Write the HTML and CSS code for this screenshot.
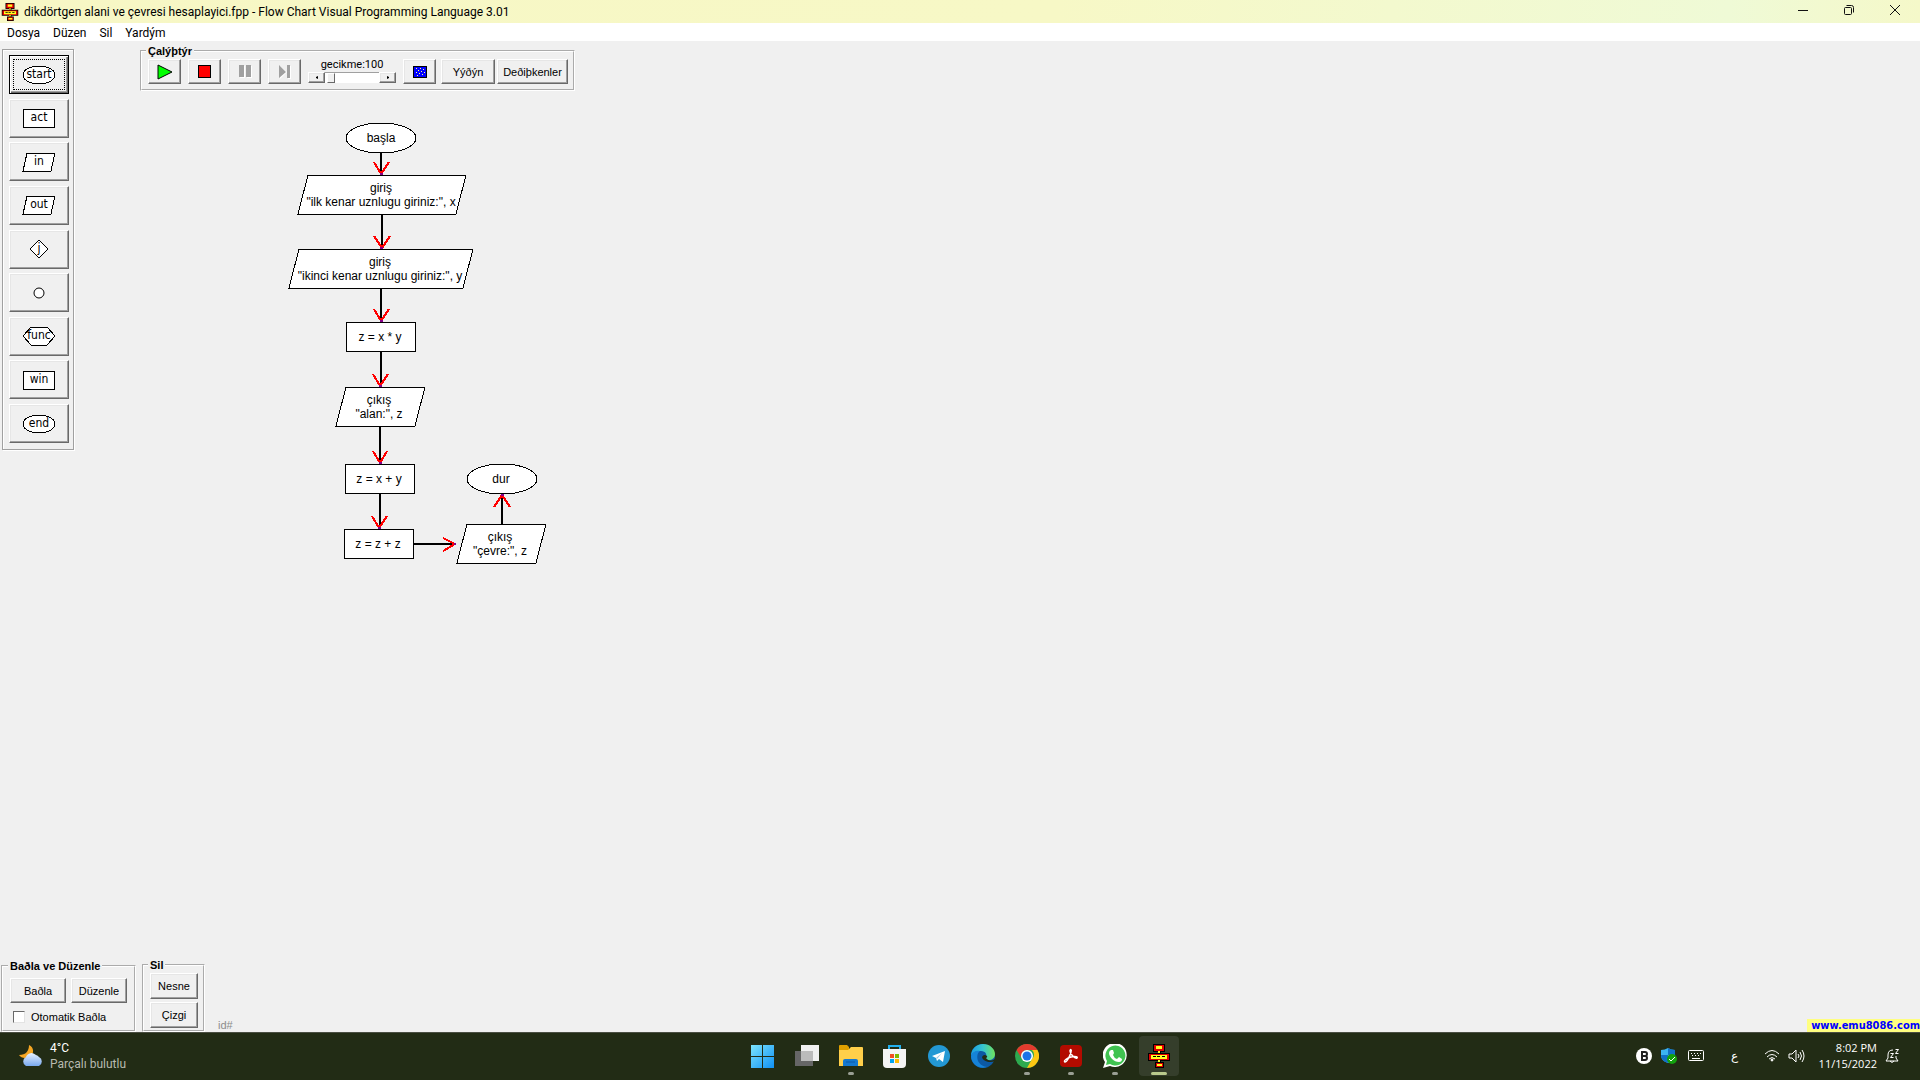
FILE: index.html
```html
<!DOCTYPE html>
<html lang="tr">
<head>
<meta charset="utf-8">
<meta name="viewport" content="width=device-width, initial-scale=1">
<title>dikdörtgen alani ve çevresi hesaplayici.fpp - Flow Chart Visual Programming Language 3.01</title>
<link rel="stylesheet" href="styles.css">
</head>
<body>
<svg class="defs" width="0" height="0" aria-hidden="true">
  <symbol id="app" viewBox="0 0 24 24">
    <path fill="#000" d="M6 0h12v8H6zM1 9h22v8H1zM8 18h9v6H8zM11 7h3v12h-3z"/>
    <path fill="#e00000" d="M7 1h10v6H7zM2 10h20v6H2zM9 19h7v4H9z"/>
    <path fill="#ffff20" d="M9 2h6v3H9zM4 11h16v4H4zM10 20h5v2h-5zM11 7h2v2h-2zM11 16h2v2h-2z"/>
    <path fill="#000" d="M6 12h3v1H6zM10 12h3v1h-3zM15 12h3v1h-3z"/>
  </symbol>
</svg>
<header class="titlebar">
  <svg class="title-icon" viewBox="0 0 24 24"><use href="#app"/></svg>
  <h1 class="title">dikdörtgen alani ve çevresi hesaplayici.fpp - Flow Chart Visual Programming Language 3.01</h1>
  <div class="window-controls">
    <button class="window-button" aria-label="Simge durumu"><svg width="12" height="12" viewBox="0 0 12 12"><path d="M1 6h10" stroke="#111" shape-rendering="crispEdges"/></svg></button>
    <button class="window-button" aria-label="Geri yükle"><svg width="12" height="12" viewBox="0 0 12 12" fill="none" stroke="#111"><rect x="1.5" y="3.5" width="7" height="7" rx="1"/><path d="M3.500 1.500h5q2 0 2 2v5"/></svg></button>
    <button class="window-button" aria-label="Kapat"><svg width="12" height="12" viewBox="0 0 12 12" stroke="#111"><path d="M1 1l10 10M11 1L1 11"/></svg></button>
  </div>
</header>
<nav class="menubar">
  <a class="menu-item" href="#">Dosya</a>
  <a class="menu-item" href="#">Düzen</a>
  <a class="menu-item" href="#">Sil</a>
  <a class="menu-item" href="#">Yardým</a>
</nav>
<main class="workspace">
  <div class="upper">
    <aside class="palette">
      <button class="btn shape-button selected"><svg class="shape" viewBox="0 0 34 20"><ellipse cx="17" cy="10" rx="16" ry="9"/><text x="17" y="13">start</text></svg></button>
      <button class="btn shape-button"><svg class="shape" viewBox="0 0 34 20"><rect x="1" y="1" width="31" height="18"/><text x="17" y="13">act</text></svg></button>
      <button class="btn shape-button"><svg class="shape" viewBox="0 0 34 20"><path d="M5 1h28l-4 18H1z"/><text x="17" y="13">in</text></svg></button>
      <button class="btn shape-button"><svg class="shape" viewBox="0 0 34 20"><path d="M5 1h28l-4 18H1z"/><text x="17" y="13">out</text></svg></button>
      <button class="btn shape-button"><svg class="shape" viewBox="0 0 34 20"><path d="M17 1l9 9-9 9-9-9z"/><text x="17" y="13">j</text></svg></button>
      <button class="btn shape-button" aria-label="Bağlantı noktası"><svg class="shape" viewBox="0 0 34 20"><circle class="smooth" cx="17" cy="10" r="5"/></svg></button>
      <button class="btn shape-button"><svg class="shape" viewBox="0 0 34 20"><path d="M1 10l8-9h16l8 9-8 9H9z"/><text x="17" y="13">func</text></svg></button>
      <button class="btn shape-button"><svg class="shape" viewBox="0 0 34 20"><rect x="1" y="1" width="31" height="18"/><text x="17" y="13">win</text></svg></button>
      <button class="btn shape-button"><svg class="shape" viewBox="0 0 34 20"><ellipse cx="17" cy="10" rx="16" ry="9"/><text x="17" y="13">end</text></svg></button>
    </aside>
    <div class="editor">
      <fieldset class="group run-group">
        <legend class="legend">Çalýþtýr</legend>
        <div class="run-row">
          <button class="btn tool" aria-label="Çalıştır"><svg width="18" height="16" viewBox="0 0 18 16"><path d="M2 1v14l14-7z" fill="#0f0" stroke="#000"/></svg></button>
          <button class="btn tool" aria-label="Durdur"><svg width="14" height="14" viewBox="0 0 14 14"><path d="M0 0h13v13H0z"/><path d="M1 1h11v11H1z" fill="red"/></svg></button>
          <button class="btn tool" aria-label="Duraklat"><svg width="14" height="14" viewBox="0 0 14 14"><path d="M2 1h5v12H2zM9 1h5v12H9z" fill="#fff"/><path d="M1 0h5v12H1zM8 0h5v12H8z" fill="#a0a0a0"/></svg></button>
          <button class="btn tool" aria-label="Adım"><svg width="14" height="14" viewBox="0 0 14 14"><path d="M2 1v13l7-7zM10 1h3v13h-3z" fill="#fff"/><path d="M1 0v13l7-6zM9 0h3v13H9z" fill="#a0a0a0"/></svg></button>
          <div class="delay">
            <label class="delay-label" for="delay">gecikme:100</label>
            <div class="scroll">
              <button class="btn arrow" aria-label="Azalt"><svg width="2" height="3" viewBox="0 0 2 3"><path d="M2 0v3L0 2V1z"/></svg></button>
              <input class="range" type="range" id="delay" min="0" max="1000" value="50">
              <button class="btn arrow" aria-label="Artır"><svg width="2" height="3" viewBox="0 0 2 3"><path d="M0 0v3l2-1V1z"/></svg></button>
            </div>
          </div>
          <button class="btn tool" aria-label="Ekran"><svg width="14" height="12" viewBox="0 0 14 12"><path d="M0 0h14v12H0z"/><path d="M1 1h12v10H1z" fill="#00f"/><path fill="#ff8" d="M3 2h1v1H3zM7 2h1v1H7zM10 3h1v1h-1zM5 4h1v1H5zM3 6h1v1H3zM8 5h1v1H8zM11 6h1v1h-1zM6 7h1v1H6zM4 9h1v1H4zM9 8h1v1H9z"/></svg></button>
          <button class="btn stack">Yýðýn</button>
          <button class="btn vars">Deðiþkenler</button>
        </div>
      </fieldset>
      <svg class="chart" width="440" height="480" viewBox="140 90 440 480" role="img" aria-label="Akış şeması">
        <g class="link"><path d="M381 153v21M382 215v33M381 289v32M381 352v34M380 427v36M380 494v34M414 544h40M502 524v-29"/></g>
        <g class="head"><path d="M374 162l7 12 8-12M374 236l8 12 8-12M374 309l7 12 8-12M373 374l7 12 8-12M373 451l7 12 7-12M372 516l7 12 8-12M443 538l12 6-12 7M494 507l8-12 8 12"/></g>
        <g class="tip"><path d="M380 174h3M380 248h3M380 321h3M379 386h3M379 463h3M378 528h3M454 544h2M501 495h3"/></g>
        <g class="node">
          <ellipse cx="381" cy="138" rx="35" ry="15"/>
          <path d="M308 175h158l-10 39H298z"/>
          <path d="M299 249h174l-10 39H289z"/>
          <path d="M346 322h69v29h-69z"/>
          <path d="M346 387h79l-10 39h-79z"/>
          <path d="M345 464h69v29h-69z"/>
          <path d="M344 529h69v29h-69z"/>
          <path d="M467 524h79l-10 39h-79z"/>
          <ellipse cx="502" cy="479" rx="35" ry="15"/>
        </g>
        <g class="caption">
          <text x="381" y="142">başla</text>
          <text x="381" y="192">giriş</text><text x="381" y="206">"ilk kenar uznlugu giriniz:", x</text>
          <text x="380" y="266">giriş</text><text x="380" y="280">"ikinci kenar uznlugu giriniz:", y</text>
          <text x="380" y="341">z = x * y</text>
          <text x="379" y="404">çıkış</text><text x="379" y="418">"alan:", z</text>
          <text x="379" y="483">z = x + y</text>
          <text x="378" y="548">z = z + z</text>
          <text x="500" y="541">çıkış</text><text x="500" y="555">"çevre:", z</text>
          <text x="501" y="483">dur</text>
        </g>
      </svg>
    </div>
  </div>
  <div class="lower">
    <fieldset class="group link-group">
      <legend class="legend">Baðla ve Düzenle</legend>
      <div class="pair">
        <button class="btn text-button">Baðla</button>
        <button class="btn text-button">Düzenle</button>
      </div>
      <label class="check"><input class="box" type="checkbox">Otomatik Baðla</label>
    </fieldset>
    <fieldset class="group delete-group">
      <legend class="legend">Sil</legend>
      <div class="column">
        <button class="btn delete-button">Nesne</button>
        <button class="btn delete-button">Çizgi</button>
      </div>
    </fieldset>
    <span class="ident">id#</span>
    <a class="site" href="#">www.emu8086.com</a>
  </div>
</main>
<footer class="taskbar">
  <div class="weather">
    <svg width="26" height="26" viewBox="0 0 26 26">
      <defs><linearGradient id="cl" x1="0" y1="0" x2="0" y2="1"><stop offset="0" stop-color="#e6f0ff"/><stop offset="1" stop-color="#78a8ee"/></linearGradient></defs>
      <path d="M11 2c5 2 6 9 0 12-4 2-8 1-10-2 7 0 10-4 10-10z" fill="#f5a623"/>
      <path d="M8 23a5 5 0 0 1 0-9 6 6 0 0 1 10-2 5 5 0 0 1 3 2 5 5 0 0 1 0 9z" fill="url(#cl)"/>
    </svg>
    <div class="weather-text"><span class="temp">4°C</span><span class="sky">Parçalı bulutlu</span></div>
  </div>
  <div class="apps">
    <button class="app" aria-label="Başlat"><svg width="24" height="24" viewBox="0 0 24 24"><defs><linearGradient id="wn" x1="0" y1="0" x2="1" y2="1"><stop offset="0" stop-color="#7ce4fc"/><stop offset="1" stop-color="#0f90f5"/></linearGradient></defs><path fill="url(#wn)" d="M0 1h11v11H0zM12 1h11v11H12zM0 13h11v11H0zM12 13h11v11H12z"/></svg></button>
    <button class="app" aria-label="Görev görünümü"><svg width="24" height="24" viewBox="0 0 24 24"><path d="M6 1h18v16H6z" fill="#f0f0f0"/><path d="M0 7h18v15H0z" fill="#666"/><path d="M6 7h12v10H6z" fill="#bbb"/></svg></button>
    <button class="app running" aria-label="Dosya Gezgini"><svg width="24" height="24" viewBox="0 0 24 24"><path d="M0 2q0-1 1-1h7l2 2v4H0z" fill="#e0a000"/><path d="M0 6h9l3-3h11q1 0 1 1v18H0z" fill="#ffcf4a"/><path d="M4 22v-5q0-2 2-2h11q2 0 2 2v5z" fill="#1578d0"/><path d="M7 18h9" stroke="#0c58a8"/></svg></button>
    <button class="app" aria-label="Mağaza"><svg width="24" height="24" viewBox="0 0 24 24"><path d="M6 6V2h11v4" fill="none" stroke="#23b0ee" stroke-width="2"/><path d="M0 5h23v15q0 4-4 4H4q-4 0-4-4z" fill="#f4f4f4"/><path d="M7 10h4v4H7z" fill="#f25022"/><path d="M12 10h4v4h-4z" fill="#7fba00"/><path d="M7 15h4v4H7z" fill="#00a4ef"/><path d="M12 15h4v4h-4z" fill="#ffb900"/></svg></button>
    <button class="app" aria-label="Telegram"><svg width="24" height="24" viewBox="0 0 24 24"><circle cx="12" cy="12" r="11" fill="#2398d4"/><path d="M5 12l13-5-2 11-4-3-2 2-1-3z" fill="#fff"/><path d="M9 14l6-5-5 6z" fill="#9cc8e4"/></svg></button>
    <button class="app" aria-label="Edge"><svg width="24" height="24" viewBox="0 0 24 24"><defs><linearGradient id="e1" x1="0" y1="0" x2="1" y2="0"><stop offset="0" stop-color="#1b9de2"/><stop offset=".5" stop-color="#36c5d0"/><stop offset="1" stop-color="#6fe35c"/></linearGradient></defs><circle cx="12" cy="12" r="12" fill="#0c59a4"/><path d="M0 12C0 5 5 0 12 0s12 5 12 10c0 4-3 6-6 6-4 0-5-2-3-3 1-2 0-6-5-6C5 7 1 9 0 12z" fill="url(#e1)"/><path d="M0 12c1-4 5-6 9-5-4 2-5 14 7 16C8 26 0 20 0 12z" fill="#1683d8"/><path d="M24 17c-4 2-12 1-13-4 1-2 3-3 5-1 1 1-2 2 0 3 2 2 5 2 8 0z" fill="#222c15"/></svg></button>
    <button class="app running" aria-label="Chrome"><svg width="24" height="24" viewBox="0 0 24 24"><circle cx="12" cy="12" r="12" fill="#2da94f"/><path d="M1.600 6A12 12 0 0 1 22.400 6H12a6 6 0 0 0-5 9z" fill="#e33b2e"/><path d="M22.400 6A12 12 0 0 1 12 24l5-9a6 6 0 0 0 0-9z" fill="#fdc713"/><circle cx="12" cy="12" r="6" fill="#fff"/><circle cx="12" cy="12" r="4.500" fill="#1a73e8"/></svg></button>
    <button class="app running" aria-label="Acrobat"><svg width="24" height="24" viewBox="0 0 24 24"><rect x="1" y="1" width="22" height="22" rx="4" fill="#b30b00"/><path d="M6 18c-2-1 2-4 6-5 5-1 7 0 6 1-2 1-7-4-7-7 0-2 2-2 1 1-1 4-4 10-6 10z" fill="none" stroke="#fff" stroke-width="1.500"/></svg></button>
    <button class="app running" aria-label="WhatsApp"><svg width="24" height="24" viewBox="0 0 24 24"><path d="M0 24l2-6a12 12 0 1 1 5 4z" fill="#fff"/><path d="M3 21l1-4a10 10 0 1 1 3 3z" fill="#40c351"/><path d="M8 6h2l1 3-1 2q1 3 4 4l2-2 3 2q0 3-3 3C11 18 6 13 6 9q0-2 2-3z" fill="#fff"/></svg></button>
    <button class="app running active" aria-label="Flow Chart"><svg width="24" height="24" viewBox="0 0 24 24"><use href="#app"/></svg></button>
  </div>
  <div class="tray">
    <svg width="16" height="16" viewBox="0 0 16 16"><circle cx="8" cy="8" r="8" fill="#fff"/><path fill="none" stroke="#222" stroke-width="2" d="M6 4v8M5 4h4q2 0 2 2t-2 2H6h3q2 0 2 2t-2 2H5"/></svg>
    <svg class="shield" width="16" height="16" viewBox="0 0 16 16"><path d="M0 2q4 0 7-2 3 2 7 2v5q0 6-7 8-7-2-7-8z" fill="#3cb4f4"/><path d="M7 0q3 2 7 2v5H7zM0 7h7v8Q0 13 0 7z" fill="#1170c8"/><circle cx="11" cy="11" r="5" fill="#13a10e"/><path d="M8 11l2 2 4-4" fill="none" stroke="#fff"/></svg>
    <svg class="keyboard" width="16" height="12" viewBox="0 0 16 12" fill="none" stroke="#fff"><rect x=".5" y=".5" width="15" height="10" rx="1"/><path d="M3 3.500h1M6 3.500h1M9 3.500h1M12 3.500h1M4 5.500h1M7 5.500h1M10 5.500h1M4 8.500h8"/></svg>
    <span class="lang">ع</span>
    <svg class="wifi" width="16" height="14" viewBox="0 0 16 14" fill="none" stroke="#fff"><path d="M1 5q7-7 14 0M3 8q5-5 10 0M5 10q3-3 6 0"/><circle cx="8" cy="11" r="1" fill="#fff"/></svg>
    <svg class="speaker" width="17" height="14" viewBox="0 0 17 14" fill="none" stroke="#fff"><path d="M1 5h3l4-4v12L4 9H1zM10 5q2 2 0 4M12 3q3 4 0 8M14 1q4 6 0 12"/></svg>
    <div class="clock"><span>8:02 PM</span><span>11/15/2022</span></div>
    <svg width="15" height="16" viewBox="0 0 15 16" fill="none" stroke="#fff"><path d="M8 2Q3 2 3 7v3l-2 3h12l-2-3V8M5 13q2 3 4 0M5.500 5.500h3l-3 4h3M10.500 1.500h3l-3 4h3"/></svg>
  </div>
</footer>
</body>
</html>
```
FILE: styles.css
```css
* { box-sizing: border-box; }

body {
  margin: 0;
  min-height: 100vh;
  display: flex;
  flex-direction: column;
  background: #f0f0f0;
  color: #000;
  font: 11px/14px "Liberation Sans", Arial, sans-serif;
}

button { font: inherit; color: inherit; padding: 0; border: 0; background: none; }
svg { display: block; flex: none; }
.defs { position: absolute; }

/* Title bar and menu */
.titlebar {
  display: flex;
  align-items: center;
  height: 23px;
  padding: 0 2px 0 1px;
  background: linear-gradient(90deg, #f7f7c5 0%, #f7f8c6 55%, #effad6 90%, #f5f8c9 100%);
}
.title-icon { width: 18px; height: 18px; }
.title {
  flex: 1;
  margin: 0 0 0 5px;
  font: 12px/18px Roboto, "Noto Sans", sans-serif;
}
.window-controls { display: flex; align-self: flex-start; }
.window-button { width: 46px; height: 20px; display: grid; place-items: center; }
.menubar {
  display: flex;
  gap: 13px;
  height: 18px;
  padding: 0 7px;
  background: #fff;
}
.menu-item { color: #000; text-decoration: none; font: 12px/20px Roboto, "Noto Sans", sans-serif; }

/* Workspace */
.workspace { flex: 1; display: flex; flex-direction: column; justify-content: space-between; }
.upper { display: flex; align-items: flex-start; gap: 66px; padding: 3px 2px; }
.palette { border: 1px solid #a0a0a0; box-shadow: 1px 1px 0 #fff, inset 1px 1px 0 #fff; }
.group { border: 2px groove #fff; margin: 0; min-width: 0; }
.legend { margin-left: -2px; padding: 0 2px; font-weight: bold; }

.btn {
  display: grid;
  place-items: center;
  background: #f0f0f0;
  border: 1px solid;
  border-color: #fff #696969 #696969 #fff;
  box-shadow: inset -1px -1px 0 #a0a0a0, inset 1px 1px 0 #e6e6e6;
}

/* Shape palette */
.palette {
  display: flex;
  flex-direction: column;
  justify-content: space-between;
  width: 72px;
  height: 401px;
  margin-top: 5px;
  padding: 5px 4px 6px 6px;
}
.shape-button { width: 60px; height: 39px; }
.selected { border-color: #000; outline: 1px dotted #000; outline-offset: -5px; box-shadow: inset 1px 1px 0 #fff, inset -1px -1px 0 #696969, inset -2px -2px 0 #a0a0a0; }
.shape { width: 34px; height: 20px; fill: #fff; stroke: #000; shape-rendering: crispEdges; }
.smooth { shape-rendering: auto; }
.shape text { fill: #000; stroke: none; text-anchor: middle; font: 12px "DejaVu Sans Condensed", "DejaVu Sans", sans-serif; }

/* Run toolbar */
.run-group { width: max-content; padding: 1px 5px 5px 6px; }
.run-row { display: flex; gap: 7px; }
.tool { width: 33px; height: 25px; }
.delay { display: flex; flex-direction: column; width: 88px; }
.delay-label { margin-bottom: 2px; text-align: center; line-height: 11px; font-family: Roboto, sans-serif; }
.scroll { display: flex; height: 11px; }
.arrow { width: 17px; height: 11px; }
.range { flex: 1; min-width: 0; height: 11px; margin: 0; appearance: none; background: #fff; border-top: 1px solid #a0a0a0; }
.range::-webkit-slider-thumb { appearance: none; width: 8px; height: 10px; background: #f0f0f0; border: 1px solid; border-color: #fff #696969 #696969 #fff; }
.stack { width: 54px; height: 25px; margin-left: -2px; }
.vars { width: 71px; height: 25px; margin-left: -5px; }

/* Flow chart */
.chart { margin-top: -1px; }
.link { stroke: #000; stroke-width: 2; }
.head { stroke: #f00; stroke-width: 2; fill: none; shape-rendering: crispEdges; }
.tip { stroke: #808; stroke-width: 2; }
.node { stroke: #000; fill: #fff; shape-rendering: crispEdges; }
.caption { font: 12px "Liberation Sans", Arial, sans-serif; text-anchor: middle; }

/* Bottom groups */
.lower { display: flex; align-items: flex-end; gap: 6px; padding-left: 1px; }
.link-group { width: 135px; padding: 5px 5px 6px 7px; }
.delete-group { width: 63px; padding: 1px 5px 2px 6px; }
.pair { display: flex; gap: 5px; }
.text-button { width: 56px; height: 25px; }
.column { display: flex; flex-direction: column; gap: 3px; }
.delete-button { width: 48px; height: 26px; }
.check { display: flex; align-items: center; gap: 6px; height: 14px; margin: 7px 0 0 3px; }
.box { appearance: none; width: 12px; height: 12px; margin: 0; background: #fff; border: 1px solid; border-color: #696969 #e3e3e3 #e3e3e3 #696969; }
.ident { margin-left: 7px; color: #8c8c8c; }
.site {
  margin-left: auto;
  padding-left: 4px;
  background: #ffff80;
  color: #00f;
  text-decoration: none;
  font: bold 11px/13px "DejaVu Sans Condensed", "DejaVu Sans", sans-serif;
}

/* Taskbar */
.taskbar {
  display: grid;
  grid-template-columns: 1fr auto 1fr;
  align-items: center;
  height: 48px;
  box-shadow: inset 0 1px 0 #4a4e42;
  background: #222c15;
  color: #fff;
  font: 12px/16px Roboto, "Noto Sans", sans-serif;
}
.weather { display: flex; align-items: center; gap: 6px; padding-left: 18px; }
.weather-text { display: flex; flex-direction: column; }
.sky { color: #b8bab0; }
.apps { display: flex; gap: 4px; padding-left: 2px; }
.app { position: relative; width: 40px; height: 40px; display: grid; place-items: center; border-radius: 4px; }
.active { background: #353e2b; }
.running::after {
  content: "";
  position: absolute;
  left: 17px;
  bottom: 1px;
  width: 6px;
  height: 3px;
  border-radius: 2px;
  background: #9a9f94;
}
.active::after { left: 12px; width: 16px; background: #b9ca8c; }
.tray { display: flex; align-items: center; justify-content: flex-end; padding-right: 20px; }
.shield { margin-left: 9px; }
.keyboard { margin-left: 11px; }
.lang { width: 10px; margin: 0 25px; text-align: center; }
.speaker { margin-left: 8px; }
.clock { display: flex; flex-direction: column; width: 72px; margin-right: 8px; text-align: right; font-family: "Open Sans", sans-serif; font-size: 11px; }
```
